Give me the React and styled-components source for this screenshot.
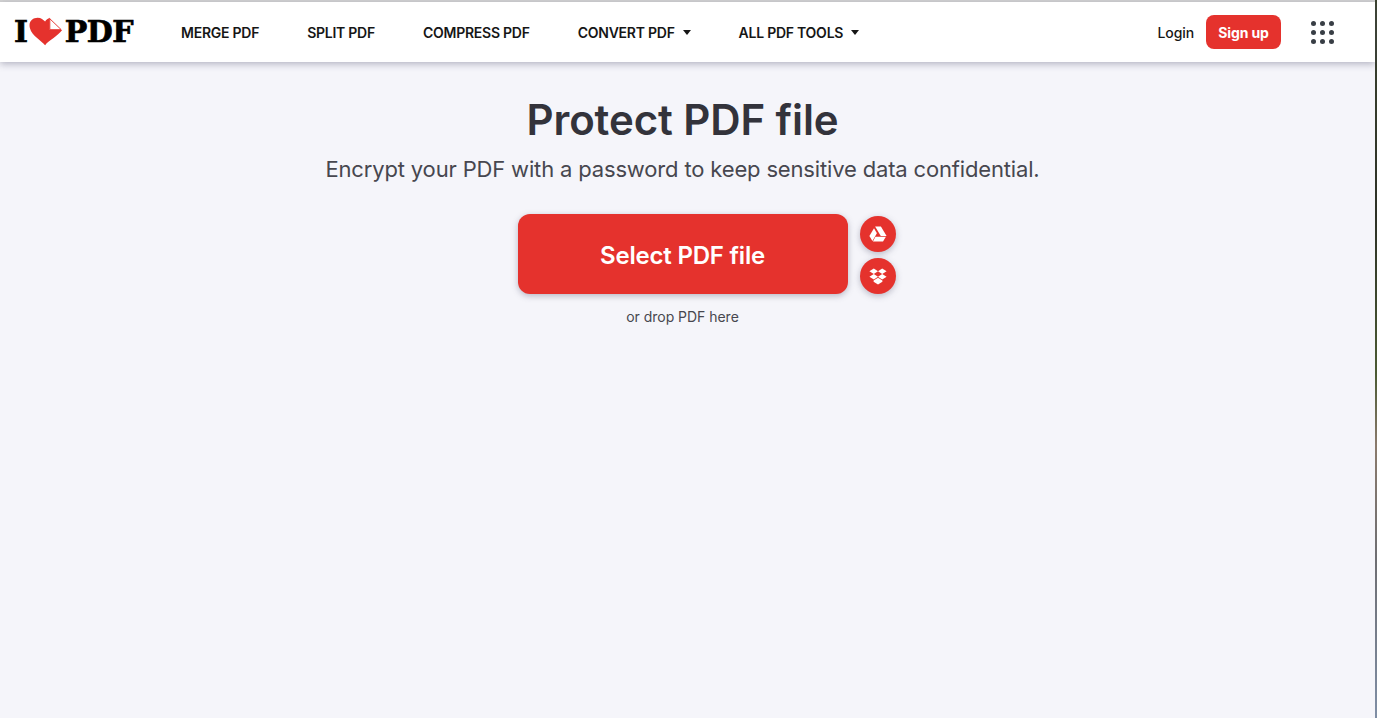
import styled, { createGlobalStyle } from 'styled-components'

const GlobalStyle = createGlobalStyle`
  html, body {
    margin: 0;
    padding: 0;
    height: 100%;
    overflow: hidden;
    background: #f5f5fa;
  }
  #root {
    height: 100%;
  }
`

const Screen = styled.div`
  display: flex;
  width: 1377px;
  height: 718px;
  font-family: Inter, "Liberation Sans", sans-serif;
`

const Page = styled.div`
  display: flex;
  flex-direction: column;
  width: 1375px;
  height: 718px;
  background: #f5f5fa;
  border-top: 2px solid #d4d4d4;
  box-sizing: border-box;
`

const Wallpaper = styled.div`
  width: 2px;
  height: 718px;
  background: linear-gradient(180deg, #3d4430 0%, #2d3126 30%, #4b5a33 52%, #8a7a6c 62%, #6e6e72 78%, #7f8ea5 100%);
`

const Header = styled.header`
  display: flex;
  align-items: center;
  height: 60px;
  padding: 0 41px 0 14px;
  background: #fff;
  box-shadow: 0 2px 7px rgba(72, 72, 100, 0.38);
  position: relative;
`

const Logo = styled.a`
  display: flex;
  align-items: center;
  width: 119px;
  margin-right: 48px;
  color: #000;
  font-family: "DejaVu Serif", serif;
  font-weight: 700;
  font-size: 30px;
  line-height: 1;
  letter-spacing: -0.5px;
  -webkit-text-stroke: 0.7px #000;
`

const Nav = styled.nav`
  display: flex;
  align-items: center;
  gap: 48px;
  flex: 1;
`

const NavItem = styled.a`
  display: flex;
  align-items: center;
  gap: 8px;
  color: #161616;
  font-size: 14px;
  font-weight: 600;
  letter-spacing: -0.25px;
  white-space: nowrap;
`

const Caret = styled.span`
  width: 0;
  height: 0;
  border-left: 4.5px solid transparent;
  border-right: 4.5px solid transparent;
  border-top: 5px solid #161616;
`

const Actions = styled.div`
  display: flex;
  align-items: center;
`

const Login = styled.a`
  color: #161616;
  font-size: 14px;
  font-weight: 500;
  letter-spacing: -0.1px;
  margin-right: 12px;
`

const SignUp = styled.a`
  display: flex;
  align-items: center;
  justify-content: center;
  width: 75px;
  height: 34px;
  margin-right: 30px;
  background: #e5322d;
  border-radius: 8px;
  color: #fff;
  font-size: 14px;
  font-weight: 700;
  letter-spacing: -0.1px;
`

const AppsGrid = styled.div`
  display: grid;
  grid-template-columns: repeat(3, 5px);
  gap: 4px;
`

const AppsDot = styled.span`
  width: 5px;
  height: 5px;
  border-radius: 50%;
  background: #383e45;
`

const Main = styled.main`
  display: flex;
  flex-direction: column;
  align-items: center;
  padding-top: 32px;
  padding-right: 10px;
`

const Title = styled.h1`
  margin: 0;
  color: #33333b;
  font-size: 42px;
  line-height: 52px;
  font-weight: 600;
  letter-spacing: -0.1px;
`

const Subtitle = styled.h2`
  margin: 7px 0 0;
  color: #47474f;
  font-size: 22px;
  line-height: 32px;
  font-weight: 400;
  letter-spacing: -0.16px;
`

const UploadRow = styled.div`
  position: relative;
  margin-top: 29px;
`

const SelectButton = styled.a`
  display: flex;
  align-items: center;
  justify-content: center;
  width: 330px;
  height: 80px;
  background: #e5322d;
  border-radius: 12px;
  box-shadow: 0 2px 6px rgba(72, 72, 100, 0.35);
  color: #fff;
  font-size: 24px;
  font-weight: 600;
  letter-spacing: -0.2px;
  padding-top: 2px;
  box-sizing: border-box;
`

const CloudList = styled.div`
  position: absolute;
  top: 2px;
  left: 342px;
  display: flex;
  flex-direction: column;
  gap: 6px;
`

const CloudButton = styled.a`
  display: flex;
  align-items: center;
  justify-content: center;
  width: 36px;
  height: 36px;
  border-radius: 50%;
  background: #e5322d;
  box-shadow: 0 2px 6px rgba(72, 72, 100, 0.35);
`

const DropHint = styled.span`
  margin-top: 13px;
  color: #47474f;
  font-size: 14px;
  line-height: 20px;
  letter-spacing: -0.03px;
`

const HeartLogo = () => (
  <svg width="36" height="32" viewBox="0 0 36 32" style={{ margin: '0 2px 0 1px' }}>
    <path
      d="M17 30 C13 25 3 20 1 12 C-1 5 4 1 9 1 C13 1 15 3 17 5 C18 3 20 2 22 1 L22 14 L35 14 C31 20 21 25 17 30 Z"
      fill="#e5322d"
    />
    <path d="M22 2 L34 13.5 L22 13.5 Z" fill="#fff" stroke="#e5322d" strokeWidth="1" />
  </svg>
)

const DriveIcon = () => (
  <svg width="18" height="16" viewBox="0 0 18 16">
    <path d="M6.1 0.5 H11.9 L17.6 10 H11.8 Z" fill="#fff" />
    <path d="M5 2.2 L7.9 7.2 L3.4 15 L0.4 10 Z" fill="#fff" />
    <path d="M6.4 10.7 H16.9 L14 15.5 H3.9 Z" fill="#fff" />
  </svg>
)

const DropboxIcon = () => (
  <svg width="18" height="17" viewBox="0 0 18 17" fill="#fff">
    <path d="M4.8 0.5 L9 3.2 L4.8 6 L0.4 3.2 Z" />
    <path d="M13.2 0.5 L17.6 3.2 L13.2 6 L9 3.2 Z" />
    <path d="M4.8 6 L9 8.8 L4.8 11.5 L0.4 8.8 Z" />
    <path d="M13.2 6 L17.6 8.8 L13.2 11.5 L9 8.8 Z" />
    <path d="M4.6 12.6 L9 9.8 L13.4 12.6 L13.4 13.8 L9 16.5 L4.6 13.8 Z" />
  </svg>
)

const navItems = [
  { label: 'MERGE PDF' },
  { label: 'SPLIT PDF' },
  { label: 'COMPRESS PDF' },
  { label: 'CONVERT PDF', caret: true },
  { label: 'ALL PDF TOOLS', caret: true },
]

const App = () => {
  return (
    <Screen>
      <GlobalStyle />
      <Page>
        <Header>
          <Logo>
            I<HeartLogo />PDF
          </Logo>
          <Nav>
            {navItems.map((item) => (
              <NavItem key={item.label}>
                {item.label}
                {item.caret && <Caret />}
              </NavItem>
            ))}
          </Nav>
          <Actions>
            <Login>Login</Login>
            <SignUp>Sign up</SignUp>
            <AppsGrid>
              {Array.from({ length: 9 }, (_, i) => <AppsDot key={i} />)}
            </AppsGrid>
          </Actions>
        </Header>
        <Main>
          <Title>Protect PDF file</Title>
          <Subtitle>Encrypt your PDF with a password to keep sensitive data confidential.</Subtitle>
          <UploadRow>
            <SelectButton>Select PDF file</SelectButton>
            <CloudList>
              <CloudButton><DriveIcon /></CloudButton>
              <CloudButton><DropboxIcon /></CloudButton>
            </CloudList>
          </UploadRow>
          <DropHint>or drop PDF here</DropHint>
        </Main>
      </Page>
      <Wallpaper />
    </Screen>
  )
}

export default App
